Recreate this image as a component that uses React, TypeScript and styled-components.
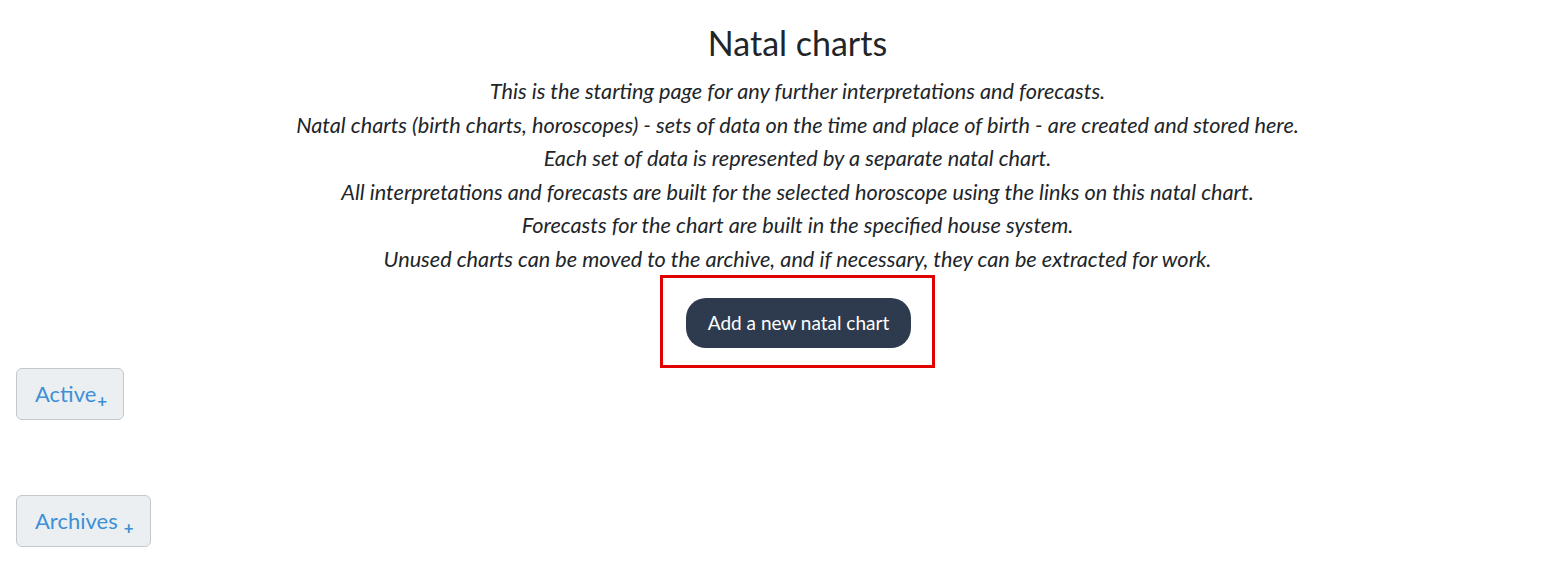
import styled, { createGlobalStyle } from 'styled-components';

const GlobalStyle = createGlobalStyle`
  body {
    margin: 0;
    background: #ffffff;
    font-family: Lato, "Open Sans", sans-serif;
    color: #212529;
  }
`;

const Page = styled.div`
  display: flex;
  flex-direction: column;
  padding: 20px 16px 0;
`;

const Intro = styled.section`
  display: flex;
  flex-direction: column;
  align-items: center;
  padding-left: 52px;
`;

const Title = styled.h1`
  margin: 0 0 9px;
  font-size: 34px;
  font-weight: 400;
  line-height: 46px;
  color: #212529;
`;

const Line = styled.p`
  margin: 0;
  font-size: 21.7px;
  font-style: italic;
  line-height: 33.6px;
  text-align: center;
`;

const Highlight = styled.div`
  display: flex;
  margin-top: -2px;
  padding: 20px 21px 17px 23px;
  border: 3px solid #e00000;
`;

const PrimaryButton = styled.button`
  height: 50px;
  padding: 0 22px;
  border: none;
  border-radius: 20px;
  background: #2e3b4e;
  color: #ffffff;
  font-family: Lato, sans-serif;
  font-size: 19px;
  cursor: pointer;
`;

const Toggle = styled.button<{ $gap: number }>`
  align-self: flex-start;
  display: flex;
  align-items: baseline;
  margin-top: ${(p) => p.$gap}px;
  height: 52px;
  padding: 0 16px 0 18px;
  border: 1px solid #c4c8cc;
  border-radius: 6px;
  background: #eceff1;
  color: #3d8fd6;
  font-family: Lato, sans-serif;
  font-size: 22px;
  line-height: 50px;
  cursor: pointer;
`;

const Plus = styled.span<{ $space: boolean }>`
  margin-left: ${(p) => (p.$space ? 6 : 1)}px;
  font-size: 17px;
  font-weight: 700;
  position: relative;
  top: 5px;
  line-height: 1;
`;

const lines = [
  'This is the starting page for any further interpretations and forecasts.',
  'Natal charts (birth charts, horoscopes) - sets of data on the time and place of birth - are created and stored here.',
  'Each set of data is represented by a separate natal chart.',
  'All interpretations and forecasts are built for the selected horoscope using the links on this natal chart.',
  'Forecasts for the chart are built in the specified house system.',
  'Unused charts can be moved to the archive, and if necessary, they can be extracted for work.',
];

export default function App() {
  return (
    <>
      <GlobalStyle />
      <Page>
        <Intro>
          <Title>Natal charts</Title>
          {lines.map((text) => (
            <Line key={text}>{text}</Line>
          ))}
          <Highlight>
            <PrimaryButton>Add a new natal chart</PrimaryButton>
          </Highlight>
        </Intro>
        <Toggle $gap={0}>
          Active<Plus $space={false}>+</Plus>
        </Toggle>
        <Toggle $gap={75}>
          Archives<Plus $space>+</Plus>
        </Toggle>
      </Page>
    </>
  );
}
